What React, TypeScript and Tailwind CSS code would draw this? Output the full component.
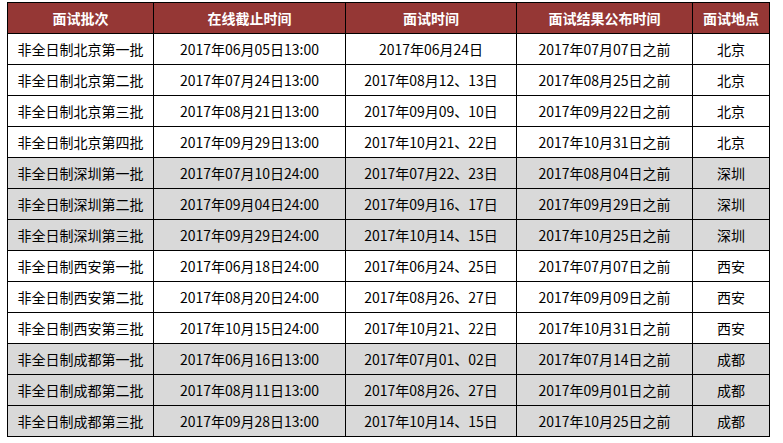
const headers = ["面试批次", "在线截止时间", "面试时间", "面试结果公布时间", "面试地点"];

const rows: { cells: string[]; gray: boolean }[] = [
  { cells: ["非全日制北京第一批", "2017年06月05日13:00", "2017年06月24日", "2017年07月07日之前", "北京"], gray: false },
  { cells: ["非全日制北京第二批", "2017年07月24日13:00", "2017年08月12、13日", "2017年08月25日之前", "北京"], gray: false },
  { cells: ["非全日制北京第三批", "2017年08月21日13:00", "2017年09月09、10日", "2017年09月22日之前", "北京"], gray: false },
  { cells: ["非全日制北京第四批", "2017年09月29日13:00", "2017年10月21、22日", "2017年10月31日之前", "北京"], gray: false },
  { cells: ["非全日制深圳第一批", "2017年07月10日24:00", "2017年07月22、23日", "2017年08月04日之前", "深圳"], gray: true },
  { cells: ["非全日制深圳第二批", "2017年09月04日24:00", "2017年09月16、17日", "2017年09月29日之前", "深圳"], gray: true },
  { cells: ["非全日制深圳第三批", "2017年09月29日24:00", "2017年10月14、15日", "2017年10月25日之前", "深圳"], gray: true },
  { cells: ["非全日制西安第一批", "2017年06月18日24:00", "2017年06月24、25日", "2017年07月07日之前", "西安"], gray: false },
  { cells: ["非全日制西安第二批", "2017年08月20日24:00", "2017年08月26、27日", "2017年09月09日之前", "西安"], gray: false },
  { cells: ["非全日制西安第三批", "2017年10月15日24:00", "2017年10月21、22日", "2017年10月31日之前", "西安"], gray: false },
  { cells: ["非全日制成都第一批", "2017年06月16日13:00", "2017年07月01、02日", "2017年07月14日之前", "成都"], gray: true },
  { cells: ["非全日制成都第二批", "2017年08月11日13:00", "2017年08月26、27日", "2017年09月01日之前", "成都"], gray: true },
  { cells: ["非全日制成都第三批", "2017年09月28日13:00", "2017年10月14、15日", "2017年10月25日之前", "成都"], gray: true },
];

const App = () => {
  return (
    <div className="w-[783px] h-[443px] bg-white pt-[2px] pl-[7px] font-['Noto_Sans_CJK_SC','Noto_Sans',sans-serif]">
      <div className="inline-grid grid-cols-[145px_191px_170px_175px_76px] auto-rows-[30px] gap-px bg-black p-px">
        {/* Header */}
        {headers.map((h) => (
          <div
            key={h}
            className="flex items-center justify-center bg-[#953735] text-white text-[14px] font-bold leading-none"
          >
            {h}
          </div>
        ))}

        {/* Body */}
        {rows.map((row, i) =>
          row.cells.map((c, j) => (
            <div
              key={`${i}-${j}`}
              className={`flex items-center justify-center text-[14px] text-black leading-none ${
                row.gray ? "bg-[#d9d9d9]" : "bg-white"
              }`}
            >
              {c}
            </div>
          ))
        )}
      </div>
    </div>
  );
};

export default App;
